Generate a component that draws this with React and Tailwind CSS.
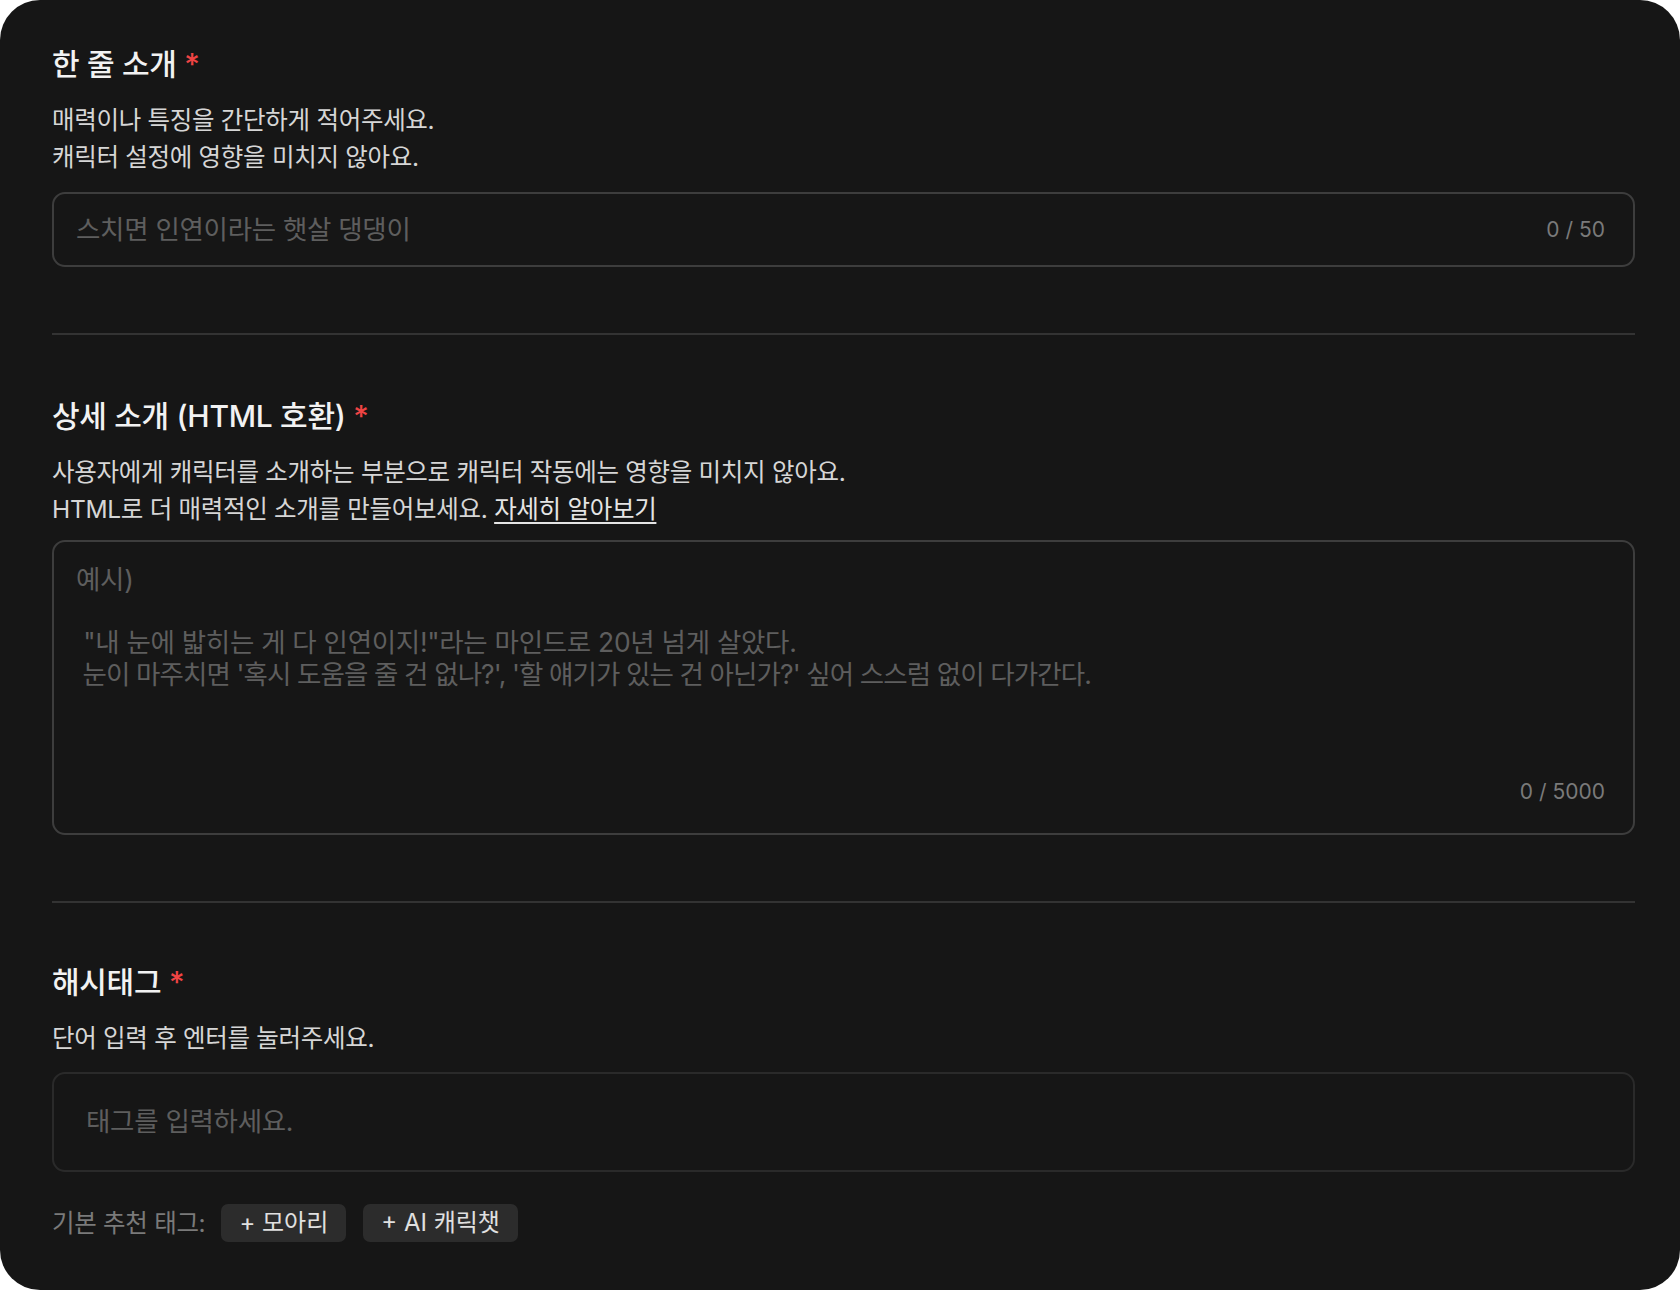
import React from 'react';

const font = { fontFamily: '"Inter", "Noto Sans CJK KR", sans-serif' };

const Title = ({ children }) => (
  <h2 className="text-[30px] leading-[36px] font-medium text-[#f2f2f2] tracking-[-0.3px]">
    {children} <span className="text-[#ef4444]">*</span>
  </h2>
);

const Desc = ({ children }) => (
  <p className="mt-[20px] text-[24.5px] leading-[37px] text-[#d6d6d6] tracking-[-0.3px]">{children}</p>
);

export default function App() {
  return (
    <div className="min-h-screen bg-white" style={font}>
      <div className="bg-[#161616] rounded-[40px] min-h-[1290px] pl-[52px] pr-[45px] pt-[46px] pb-[48px]">
        {/* 한 줄 소개 */}
        <section>
          <Title>한 줄 소개</Title>
          <Desc>
            매력이나 특징을 간단하게 적어주세요.
            <br />
            캐릭터 설정에 영향을 미치지 않아요.
          </Desc>
          <div className="mt-[16px] h-[75px] rounded-[13px] border-2 border-[#3d3d3d] flex items-center justify-between pl-[22px] pr-[28px]">
            <span className="text-[26.5px] text-[#5e5e5e] tracking-[-0.3px]">스치면 인연이라는 햇살 댕댕이</span>
            <span className="text-[21px] text-[#7a7a7a]">0 / 50</span>
          </div>
        </section>

        <div className="mt-[66px] h-[2px] bg-[#333333]" />

        {/* 상세 소개 */}
        <section className="mt-[63px]">
          <Title>상세 소개 (HTML 호환)</Title>
          <Desc>
            사용자에게 캐릭터를 소개하는 부분으로 캐릭터 작동에는 영향을 미치지 않아요.
            <br />
            HTML로 더 매력적인 소개를 만들어보세요.{' '}
            <a className="underline underline-offset-4 text-[#e5e5e5]">자세히 알아보기</a>
          </Desc>
          <div className="mt-[12px] h-[295px] rounded-[13px] border-2 border-[#3d3d3d] flex flex-col justify-between pl-[22px] pr-[28px] pt-[21px] pb-[26px]">
            <div className="text-[26.5px] leading-[32px] text-[#5e5e5e] tracking-[-0.3px] whitespace-pre">
              <p>예시)</p>
              <p className="mt-[31px]"> "내 눈에 밟히는 게 다 인연이지!"라는 마인드로 20년 넘게 살았다.</p>
              <p className="tracking-[-0.9px]"> 눈이 마주치면 '혹시 도움을 줄 건 없나?', '할 얘기가 있는 건 아닌가?' 싶어 스스럼 없이 다가간다.</p>
            </div>
            <span className="self-end text-[21px] text-[#7a7a7a]">0 / 5000</span>
          </div>
        </section>

        <div className="mt-[66px] h-[2px] bg-[#333333]" />

        {/* 해시태그 */}
        <section className="mt-[61px]">
          <Title>해시태그</Title>
          <Desc>단어 입력 후 엔터를 눌러주세요.</Desc>
          <div className="mt-[15px] h-[100px] rounded-[13px] border-2 border-[#2a2a2a] flex items-center pl-[32px]">
            <span className="text-[26.5px] text-[#5e5e5e] tracking-[-0.3px]">태그를 입력하세요.</span>
          </div>
          <div className="mt-[32px] flex items-center gap-[16px]">
            <span className="text-[24.5px] text-[#7a7a7a] tracking-[-0.3px]">기본 추천 태그:</span>
            <div className="flex gap-[17px]">
              <button className="h-[38px] px-[18px] rounded-[7px] bg-[#2c2c2c] text-[24px] text-[#e0e0e0]">+ 모아리</button>
              <button className="h-[38px] px-[18px] rounded-[7px] bg-[#2c2c2c] text-[24px] text-[#e0e0e0]">+ AI 캐릭챗</button>
            </div>
          </div>
        </section>
      </div>
    </div>
  );
}
